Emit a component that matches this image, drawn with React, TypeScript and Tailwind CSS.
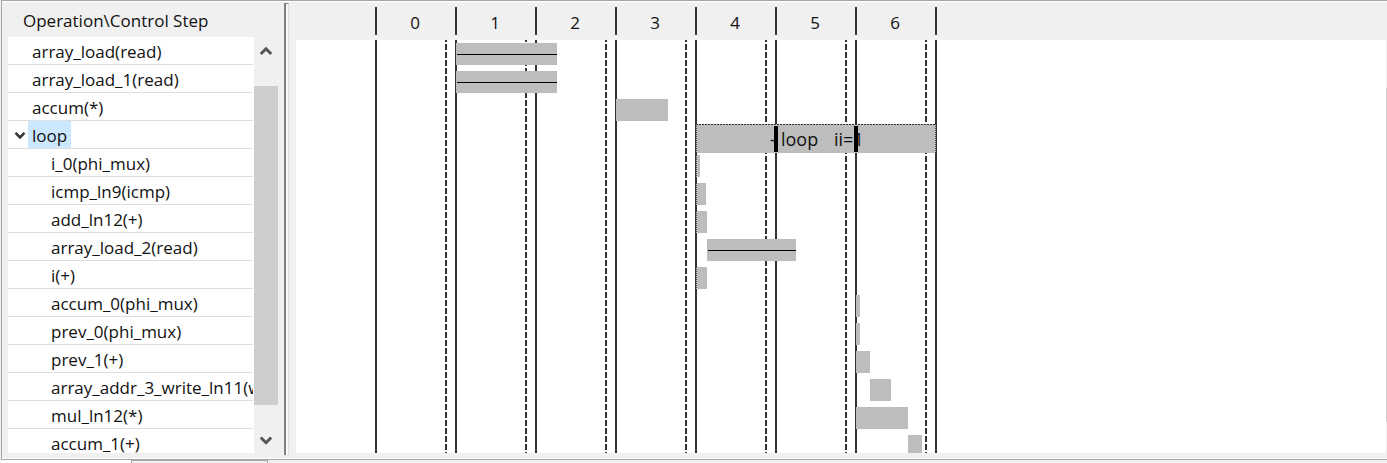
const steps = [0, 1, 2, 3, 4, 5, 6];
const STEP = 80;
const ROW = 28;

type Op = { name: string; level: number; start: number; width: number; line?: boolean; group?: boolean };

const ops: Op[] = [
  { name: "array_load(read)", level: 0, start: 80, width: 101, line: true },
  { name: "array_load_1(read)", level: 0, start: 80, width: 101, line: true },
  { name: "accum(*)", level: 0, start: 240, width: 52 },
  { name: "loop", level: 0, start: 320, width: 240, group: true },
  { name: "i_0(phi_mux)", level: 1, start: 320, width: 4 },
  { name: "icmp_ln9(icmp)", level: 1, start: 320, width: 10 },
  { name: "add_ln12(+)", level: 1, start: 320, width: 11 },
  { name: "array_load_2(read)", level: 1, start: 331, width: 89, line: true },
  { name: "i(+)", level: 1, start: 320, width: 11 },
  { name: "accum_0(phi_mux)", level: 1, start: 480, width: 4 },
  { name: "prev_0(phi_mux)", level: 1, start: 480, width: 4 },
  { name: "prev_1(+)", level: 1, start: 480, width: 14 },
  { name: "array_addr_3_write_ln11(write)", level: 1, start: 494, width: 21 },
  { name: "mul_ln12(*)", level: 1, start: 480, width: 52 },
  { name: "accum_1(+)", level: 1, start: 532, width: 14 },
];

function Chevron({ up = false, small = false }: { up?: boolean; small?: boolean }) {
  const size = small ? 12 : 14;
  return (
    <svg width={size} height={size} viewBox="0 0 14 14" fill="none" stroke={small ? "#333333" : "#555555"} strokeWidth="3" aria-hidden="true">
      <path d={up ? "M1.8 10 7 4.8 12.2 10" : "M1.8 4.5 7 9.7 12.2 4.5"} />
    </svg>
  );
}

function OperationTree() {
  return (
    <section className="flex w-[282px] shrink-0 flex-col pl-1.5">
      <h2 className="h-[35px] pt-[7px] pl-[15px] text-[17px] leading-6">Operation\Control Step</h2>
      <div className="flex h-[416px]">
        <ul className="min-w-0 flex-1 overflow-hidden bg-white">
          {ops.map((op) => (
            <li key={op.name} className="mr-px flex h-7 items-center overflow-hidden border-b border-[#dedede] whitespace-nowrap">
              {op.group ? (
                <button aria-label="Collapse loop" className="flex w-5 shrink-0 justify-center pl-1">
                  <Chevron small />
                </button>
              ) : (
                <span className={op.level ? "w-[39px] shrink-0" : "w-5 shrink-0"} />
              )}
              <span className={op.group ? "bg-[#cce8ff] px-1 pt-0.5 text-[17px] leading-[26px]" : "px-1 pt-0.5 text-[17px] leading-[26px]"}>
                {op.name}
              </span>
            </li>
          ))}
        </ul>
        <div className="flex w-6 flex-col">
          <button aria-label="Scroll up" className="flex h-[49px] items-start justify-center pt-[7px]">
            <Chevron up />
          </button>
          <div className="h-[319px] bg-[#cdcdcd]" />
          <button aria-label="Scroll down" className="flex flex-1 items-center justify-center pt-[22px]">
            <Chevron />
          </button>
        </div>
        <div className="w-[6px]" />
      </div>
    </section>
  );
}

function Bar({ op, index }: { op: Op; index: number }) {
  const x = op.start + 1;
  const y = index * ROW + 3;
  if (op.group) {
    return (
      <g>
        <rect x={x} y={y - 3} width={op.width} height={29} fill="#bdbdbd" />
        <path d={`M${x} ${y - 2.5}h${op.width}`} stroke="#333" strokeDasharray="2 1" />
        <path d={`M${x + 0.5} ${y - 3}v29M${x + op.width - 0.5} ${y - 3}v29`} stroke="#444" strokeDasharray="1 1" />
        <text y={y + 19} fontSize="18" fill="#111">
          <tspan x={x + 74}>- </tspan>
          <tspan x={x + 85}>loop </tspan>
          <tspan x={x + 138}>ii=1</tspan>
        </text>
        <path d={`M${x + 80} ${y - 1}v26M${x + 160} ${y - 1}v26`} stroke="#000" strokeWidth="4" />
      </g>
    );
  }
  return (
    <g>
      <rect x={x} y={y} width={op.width} height="22" fill="#bdbdbd" />
      {op.start === 320 && <path d={`M${x + 0.5} ${y}v22`} stroke="#444" strokeDasharray="1 1" />}
      {op.line && <path d={`M${x + 1} ${y + 11.5}h${op.width - 1}`} stroke="#000" />}
    </g>
  );
}

function Schedule() {
  return (
    <section className="flex min-w-0 flex-1 flex-col pl-[6px]">
      <div className="flex h-[38px] pt-[5px] pl-[79px]">
        {steps.map((step) => (
          <div key={step} className="flex h-7 w-20 items-center justify-center border-l-2 border-[#333333] pt-1 pr-0.5 text-[17px] last:w-[82px] last:border-r-2">
            {step}
          </div>
        ))}
      </div>
      <div className="flex h-[413px] overflow-hidden">
        <div className="min-w-0 flex-1 bg-white pl-[79px]">
          <svg width="562" height="413" viewBox="0 0 562 413" role="img" aria-label="Operation schedule">
            {[0, ...steps.map((s) => s + 1)].map((s) => (
              <rect key={s} x={s * STEP} y="0" width="2" height="413" fill="#333333" />
            ))}
            {steps.map((s) => (
              <path key={s} d={`M${s * STEP + 71} -4V413`} stroke="#333333" strokeWidth="2" strokeDasharray="6 2" />
            ))}
            {ops.map((op, i) => (
              <Bar key={op.name} op={op} index={i} />
            ))}
          </svg>
        </div>
        <div className="w-px pt-12">
          <div className="h-[334px] bg-[#cdcdcd]" />
        </div>
      </div>
    </section>
  );
}

export default function App() {
  return (
    <main className="bg-[#f0f0f0] pl-px font-['Open_Sans',sans-serif] text-[#111111]">
      <div className="border-y border-l border-[#a6a6a6]">
        <div className="flex h-[458px] border-y border-white">
          <OperationTree />
          <div className="mt-px mb-[3px] w-[5px] border-t border-r border-l-2 border-t-[#808080] border-r-[#dcdcdc] border-l-[#808080] bg-[#f8f8f8]" />
          <div className="w-px" />
          <Schedule />
        </div>
      </div>
      <div className="flex h-[3px]">
        <div className="w-[130px] bg-white" />
        <div className="w-[137px] border-x border-t border-[#a6a6a6]" />
      </div>
    </main>
  );
}
